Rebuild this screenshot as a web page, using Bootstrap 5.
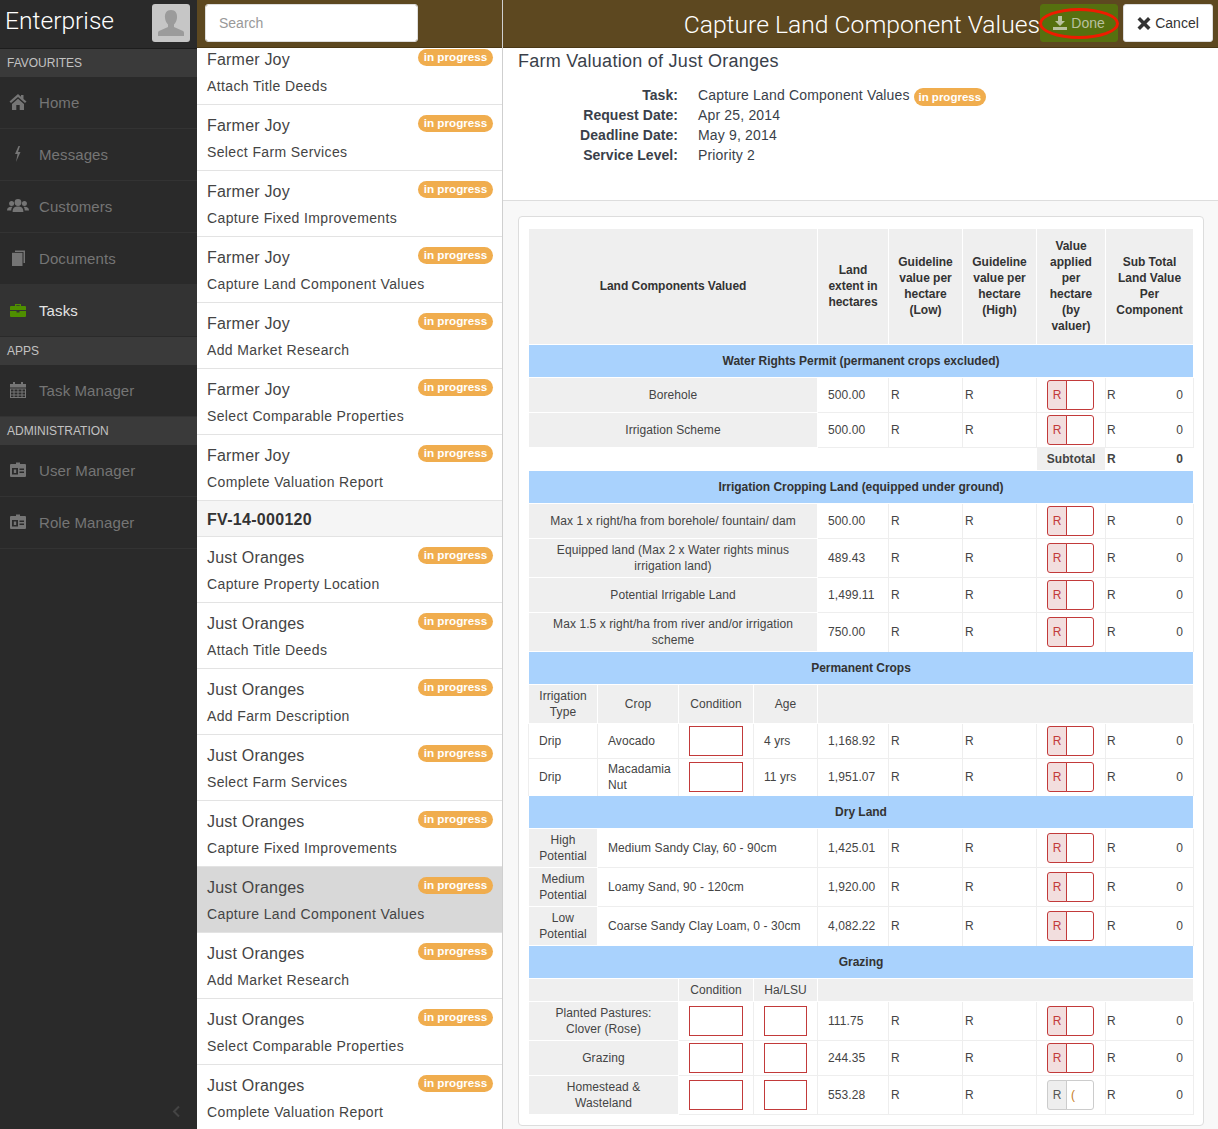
<!DOCTYPE html>
<html lang="en">
<head>
    <meta charset="UTF-8">
    <meta name="viewport" content="width=device-width, initial-scale=1.0">
    <title>Capture Land Component Values</title>
    <link rel="stylesheet" href="https://cdn.jsdelivr.net/npm/bootstrap@5.3.0/dist/css/bootstrap.min.css">
    <style>
        html, body { height: 1129px; overflow: hidden; }
        body { font-family: "Liberation Sans", Arial, sans-serif; color: #3a3f4a; font-size: 14px; background: #fff; }
        .app-shell { height: 1129px; }

        /* sidebar */
        .side-pane { width: 197px; background: #2a2a2a; flex: none; position: relative; }
        .side-top { height: 49px; padding: 4px 7px 0 5px; border-bottom: 1px solid #1d1d1d; }
        .brand-name { font-family: Roboto, "Liberation Sans", sans-serif; font-size: 24.6px; font-weight: 300; color: #fff; line-height: 34px; }
        .avatar-box { width: 38px; height: 38px; background: #c6c6c6; border-radius: 3px; }
        .side-title { height: 28px; line-height: 28px; padding-left: 7px; background: #3a3a3a; color: #c2c2c2; font-size: 12px; }
        .side-link { height: 52px; padding: 1px 0 0 7px; color: #757575; font-size: 15px; letter-spacing: .1px; border-bottom: 1px solid #333; text-decoration: none; }
        .side-link.is-on { background: #333; color: #e4e4e4; border-bottom-color: #2a2a2a; }
        .side-ico { width: 22px; height: 18px; margin: 0 10px 3px 0; flex: none; fill: #757575; }
        .is-on .side-ico { fill: #4f8f00; }
        .side-arrow { position: absolute; left: 172px; bottom: 11px; width: 9px; height: 13px; }

        /* task list */
        .list-pane { width: 306px; flex: none; border-right: 1px solid #cfcfcf; }
        .pane-top { height: 48px; padding-top: 4px; background: #5d4820; border-bottom: 1px solid #4a3815; }
        .search-box { width: 213px; height: 38px; margin-left: 8px; font-size: 14px; border-color: #ddd; border-radius: 3px; padding-left: 13px; }
        .search-box::placeholder { color: #999; }
        .list-clip { height: 1081px; overflow: hidden; }
        .task-list { margin-top: -9px; }
        .task-row { height: 66px; padding: 0 10px; border: 0; border-bottom: 2px solid #e3e3e3; border-radius: 0 !important; color: #444; position: relative; }
        .task-row.is-current { background: #d8d8d8; }
        .task-who { font-size: 16px; letter-spacing: .2px; line-height: 20px; padding-top: 11px; }
        .task-what { font-size: 14px; letter-spacing: .37px; line-height: 18px; margin-top: 7px; }
        .task-head { height: 36px; line-height: 37px; padding: 0 10px; background: #f5f5f5; border: 0; border-bottom: 2px solid #e3e3e3; font-size: 16px; letter-spacing: .3px; font-weight: 700; color: #333; border-radius: 0 !important; }
        .state-pill { display: inline-block; background: #f0ad4e; color: #fff; font-size: 11.5px; font-weight: 700; line-height: 18px; width: 72px; margin: -1px 0; text-align: center; white-space: nowrap; border-radius: 9px; letter-spacing: 0; vertical-align: -1px; }
        .task-row .state-pill { position: absolute; right: 9px; top: 10px; width: 75px; height: 17px; margin: 0; line-height: 15px; font-size: 11.7px; }

        /* main */
        .main-pane { min-width: 0; }
        .main-top { height: 48px; padding: 4px 5px 0 0; }
        .main-title { font-family: Roboto, "Liberation Sans", sans-serif; font-size: 24.7px; color: #fff; line-height: 42px; font-weight: 300; }
        .btn-done { width: 78px; height: 38px; background: #56700f; border-color: #56700f; color: #b9c19f; font-size: 14px; padding: 0; position: relative; border-radius: 3px; }
        .btn-done:hover { background: #56700f; color: #b9c19f; }
        .btn-off { width: 90px; height: 38px; margin-left: 5px; background: #fff; border-color: #ddd; color: #333; font-size: 14px; padding: 0; border-radius: 3px; }
        .done-ring { position: absolute; left: -2px; right: -2px; top: 3px; bottom: 2px; border: 3px solid #ee1c00; border-radius: 50%; }
        .btn-ico { width: 14px; height: 14px; margin-right: 4px; vertical-align: -2px; }
        .job-info { height: 153px; padding: 0 15px; border-bottom: 1px solid #ddd; }
        .job-title { font-size: 18px; letter-spacing: .27px; line-height: 24px; padding-top: 1px; margin: 0 0 12px; font-weight: 400; color: #3a3f4a; }
        .job-grid { display: grid; grid-template-columns: 160px auto; grid-auto-rows: 20px; column-gap: 20px; justify-content: start; line-height: 20px; margin: 0; }
        .job-grid dt { text-align: right; font-weight: 700; letter-spacing: .05px; }
        .job-grid dd { margin: 0; letter-spacing: .17px; }
        .work-area { background: #f8f8f8; height: 928px; padding: 15px 14px 0 15px; }
        .form-card { height: 910px; padding: 11px 10px 0 9px; border: 1px solid #ddd; border-radius: 4px; background: #fff; }

        /* valuation table */
        .val-table { table-layout: fixed; width: 665px; font-size: 12px; letter-spacing: .08px; line-height: 16px; color: #444; --bs-table-border-color: #eee; margin: 0; }
        .val-table col:nth-child(1) { width: 69px; }
        .val-table col:nth-child(2) { width: 81px; }
        .val-table col:nth-child(3) { width: 75px; }
        .val-table col:nth-child(4) { width: 64px; }
        .val-table col:nth-child(5) { width: 71px; }
        .val-table col:nth-child(6), .val-table col:nth-child(7) { width: 74px; }
        .val-table col:nth-child(8) { width: 69px; }
        .val-table col:nth-child(9) { width: 88px; }
        .val-table td, .val-table th { padding: 2px 10px; vertical-align: middle; height: 35px; }
        .val-table .row-mid td { height: 37px; }
        .val-table .row-tall td { height: 39px; }
        .val-table .row-sub td { height: 39px; }
        .val-table .row-thin td { height: 23px; }
        .val-table .row-total td { height: 23px; padding-top: 0; padding-bottom: 0; border-top-color: #eee; border-left-color: #fff; border-right-color: #fff; }
        .val-table .shade { background: #efefef; border: 1px solid #fff; text-align: center; padding-left: 6px; padding-right: 6px; }
        .val-table thead th { height: 116px; background: #efefef; border: 1px solid #fff; text-align: center; color: #333; padding: 0 5px 2px; letter-spacing: -.03px; }
        .val-table .band td { height: 33px; background: #a9d2fd; border: 1px solid #fff; text-align: center; font-weight: 700; color: #333; letter-spacing: -.03px; }
        .val-table .rand { padding-left: 2px; padding-right: 2px; }
        .val-table .sum-cell { padding-left: 1px; }
        .val-table .box-cell { padding: 2px 0 2px 10px; }
        .sum-line { display: flex; justify-content: space-between; }
        .val-box { width: 47px; height: 30px; flex-wrap: nowrap; }
        .val-box .input-group-text { width: 20px; padding: 0; justify-content: center; font-size: 12px; background: #f2dede; border-color: #c23a3a; color: #c23a3a; border-radius: 3px 0 0 3px; }
        .val-box .form-control { min-width: 0; padding: 0 4px; font-size: 12px; border-color: #c23a3a; border-radius: 0 3px 3px 0; box-shadow: none; color: #c77d1e; }
        .val-box.is-plain .input-group-text { background: #eee; border-color: #ccc; color: #555; }
        .val-box.is-plain .form-control { border-color: #ccc; }
        .cell-field { height: 30px; border: 1px solid #c23a3a; border-radius: 0; padding: 0 4px; display: block; }
        .field-wide { width: 54px; }
        .field-small { width: 43px; }
    </style>
</head>
<body>
<svg width="0" height="0" class="position-absolute">
    <defs>
        <symbol id="i-home" viewBox="0 0 18 18"><path d="M9 1 L0.5 8.5 L2 10 L9 4 L16 10 L17.5 8.5 L14.5 6 V2 H12 V3.8 Z M3 11 L9 5.8 L15 11 V17 H10.7 V12 H7.3 V17 H3 Z"/></symbol>
        <symbol id="i-bolt" viewBox="0 0 18 18"><path d="M9.5 1 L6 9 H8.5 L7 17 L11.5 7 H9 L11 1 Z"/></symbol>
        <symbol id="i-users" viewBox="0 0 22 18"><circle cx="11" cy="5.5" r="3.4"/><circle cx="4.6" cy="6.5" r="2.5"/><circle cx="17.4" cy="6.5" r="2.5"/><path d="M5.6 15 C5.6 10.5 8 9.5 11 9.5 C14 9.5 16.4 10.5 16.4 15 Z M0 13.5 C0 10.5 2 9.5 5.5 9.8 C4.5 11 4.3 12.3 4.3 13.5 Z M22 13.5 C22 10.5 20 9.5 16.5 9.8 C17.5 11 17.7 12.3 17.7 13.5 Z"/></symbol>
        <symbol id="i-docs" viewBox="0 0 18 18"><path d="M6 1.5 H16 V14 H14.5 V3 H6 Z"/><path d="M3 3.8 H13.5 V17 H3 Z"/></symbol>
        <symbol id="i-case" viewBox="0 0 18 18"><path d="M6 3 H12 V5 H16 Q17 5 17 6 V9 H1 V6 Q1 5 2 5 H6 Z M7.3 4.2 V5 H10.7 V4.2 Z M1 10 H7.5 V11.5 H10.5 V10 H17 V15 Q17 16 16 16 H2 Q1 16 1 15 Z"/></symbol>
        <symbol id="i-cal" viewBox="0 0 18 18"><path d="M4 1 H6 V3 H12 V1 H14 V3 H17 V6.500 H1 V3 H4 Z"/><path fill-rule="evenodd" d="M1 7.500 H17 V17 H1 Z M2 8.500 V10.500 H4.500 V8.500 Z M5.500 8.500 V10.500 H8.500 V8.500 Z M9.500 8.500 V10.500 H12.500 V8.500 Z M13.500 8.500 V10.500 H16 V8.500 Z M2 11.500 V13.500 H4.500 V11.500 Z M5.500 11.500 V13.500 H8.500 V11.500 Z M9.500 11.500 V13.500 H12.500 V11.500 Z M13.500 11.500 V13.500 H16 V11.500 Z M2 14.500 V16 H4.500 V14.500 Z M5.500 14.500 V16 H8.500 V14.500 Z M9.500 14.500 V16 H12.500 V14.500 Z M13.500 14.500 V16 H16 V14.500 Z"/></symbol>
        <symbol id="i-card" viewBox="0 0 18 18"><path fill-rule="evenodd" d="M7 3 V1.5 H11 V3 H16 Q17 3 17 4 V15 Q17 16 16 16 H2 Q1 16 1 15 V4 Q1 3 2 3 Z M3 7 V13.5 H9 V7 Z M10.5 7.5 V9 H15 V7.5 Z M10.5 10.5 V12 H15 V10.5 Z"/><path d="M4.8 8.5 H7.2 V12 H4.8 Z"/></symbol>
    </defs>
</svg>

<div class="app-shell d-flex">
    <!-- Sidebar -->
    <aside class="side-pane d-flex flex-column">
        <div class="side-top d-flex justify-content-between">
            <span class="brand-name">Enterprise</span>
            <div class="avatar-box">
                <svg width="38" height="38" viewBox="0 0 38 38" fill="#9b9b9b"><path d="M19 6 C23.5 6 25.5 9.5 25 14 C24.7 17 23.5 19 22 20.5 V23 L31 27 Q32 27.5 32 29 V32 H6 V29 Q6 27.5 7 27 L16 23 V20.5 C14.5 19 13.300 17 13 14 C12.500 9.500 14.500 6 19 6 Z"/></svg>
            </div>
        </div>
        <div class="side-title">FAVOURITES</div>
        <a class="side-link d-flex align-items-center" href="#"><svg class="side-ico"><use href="#i-home"/></svg>Home</a>
        <a class="side-link d-flex align-items-center" href="#"><svg class="side-ico"><use href="#i-bolt"/></svg>Messages</a>
        <a class="side-link d-flex align-items-center" href="#"><svg class="side-ico"><use href="#i-users"/></svg>Customers</a>
        <a class="side-link d-flex align-items-center" href="#"><svg class="side-ico"><use href="#i-docs"/></svg>Documents</a>
        <a class="side-link is-on d-flex align-items-center" href="#"><svg class="side-ico"><use href="#i-case"/></svg>Tasks</a>
        <div class="side-title">APPS</div>
        <a class="side-link d-flex align-items-center" href="#"><svg class="side-ico"><use href="#i-cal"/></svg>Task Manager</a>
        <div class="side-title">ADMINISTRATION</div>
        <a class="side-link d-flex align-items-center" href="#"><svg class="side-ico"><use href="#i-card"/></svg>User Manager</a>
        <a class="side-link d-flex align-items-center" href="#"><svg class="side-ico"><use href="#i-card"/></svg>Role Manager</a>
        <svg class="side-arrow" viewBox="0 0 9 13"><path d="M7 1.500 L2 6.500 L7 11.500" fill="none" stroke="#444" stroke-width="2"/></svg>
    </aside>

    <!-- Task list -->
    <section class="list-pane">
        <div class="pane-top"><input class="form-control search-box" type="text" placeholder="Search"></div>
        <div class="list-clip">
            <div class="list-group list-group-flush task-list">
                <div class="list-group-item task-row"><div class="task-who">Farmer Joy</div><div class="task-what">Attach Title Deeds</div><span class="state-pill">in progress</span></div>
                <div class="list-group-item task-row"><div class="task-who">Farmer Joy</div><div class="task-what">Select Farm Services</div><span class="state-pill">in progress</span></div>
                <div class="list-group-item task-row"><div class="task-who">Farmer Joy</div><div class="task-what">Capture Fixed Improvements</div><span class="state-pill">in progress</span></div>
                <div class="list-group-item task-row"><div class="task-who">Farmer Joy</div><div class="task-what">Capture Land Component Values</div><span class="state-pill">in progress</span></div>
                <div class="list-group-item task-row"><div class="task-who">Farmer Joy</div><div class="task-what">Add Market Research</div><span class="state-pill">in progress</span></div>
                <div class="list-group-item task-row"><div class="task-who">Farmer Joy</div><div class="task-what">Select Comparable Properties</div><span class="state-pill">in progress</span></div>
                <div class="list-group-item task-row"><div class="task-who">Farmer Joy</div><div class="task-what">Complete Valuation Report</div><span class="state-pill">in progress</span></div>
                <div class="list-group-item task-head">FV-14-000120</div>
                <div class="list-group-item task-row"><div class="task-who">Just Oranges</div><div class="task-what">Capture Property Location</div><span class="state-pill">in progress</span></div>
                <div class="list-group-item task-row"><div class="task-who">Just Oranges</div><div class="task-what">Attach Title Deeds</div><span class="state-pill">in progress</span></div>
                <div class="list-group-item task-row"><div class="task-who">Just Oranges</div><div class="task-what">Add Farm Description</div><span class="state-pill">in progress</span></div>
                <div class="list-group-item task-row"><div class="task-who">Just Oranges</div><div class="task-what">Select Farm Services</div><span class="state-pill">in progress</span></div>
                <div class="list-group-item task-row"><div class="task-who">Just Oranges</div><div class="task-what">Capture Fixed Improvements</div><span class="state-pill">in progress</span></div>
                <div class="list-group-item task-row is-current"><div class="task-who">Just Oranges</div><div class="task-what">Capture Land Component Values</div><span class="state-pill">in progress</span></div>
                <div class="list-group-item task-row"><div class="task-who">Just Oranges</div><div class="task-what">Add Market Research</div><span class="state-pill">in progress</span></div>
                <div class="list-group-item task-row"><div class="task-who">Just Oranges</div><div class="task-what">Select Comparable Properties</div><span class="state-pill">in progress</span></div>
                <div class="list-group-item task-row"><div class="task-who">Just Oranges</div><div class="task-what">Complete Valuation Report</div><span class="state-pill">in progress</span></div>
            </div>
        </div>
    </section>

    <!-- Main -->
    <main class="main-pane flex-grow-1">
        <div class="pane-top main-top d-flex justify-content-end">
            <span class="main-title">Capture Land Component Values</span>
            <button class="btn btn-done" type="button">
                <svg class="btn-ico" viewBox="0 0 14 14" fill="#b9c19f"><path d="M5 0 H9 V5 H12 L7 10 L2 5 H5 Z M0 11 H14 V14 H0 Z"/></svg>Done
                <span class="done-ring"></span>
            </button>
            <button class="btn btn-off" type="button">
                <svg class="btn-ico" viewBox="0 0 14 14" fill="#333"><path d="M3 1 L7 5 L11 1 L13.500 3.500 L9.500 7.500 L13.500 11.500 L11 14 L7 10 L3 14 L0.500 11.500 L4.500 7.500 L0.500 3.500 Z"/></svg>Cancel
            </button>
        </div>
        <div class="job-info">
            <h1 class="job-title">Farm Valuation of Just Oranges</h1>
            <dl class="job-grid">
                <dt>Task:</dt><dd>Capture Land Component Values <span class="state-pill">in progress</span></dd>
                <dt>Request Date:</dt><dd>Apr 25, 2014</dd>
                <dt>Deadline Date:</dt><dd>May 9, 2014</dd>
                <dt>Service Level:</dt><dd>Priority 2</dd>
            </dl>
        </div>
        <div class="work-area">
            <div class="form-card">
                <table class="table table-bordered val-table">
                    <colgroup><col><col><col><col><col><col><col><col><col></colgroup>
                    <thead>
                        <tr><th colspan="4">Land Components Valued</th><th>Land extent in hectares</th><th>Guideline value per hectare (Low)</th><th>Guideline value per hectare (High)</th><th>Value applied per hectare (by valuer)</th><th>Sub Total Land Value Per Component</th></tr>
                    </thead>
                    <tbody>
                        <tr class="band"><td colspan="9">Water Rights Permit (permanent crops excluded)</td></tr>
                        <tr><td colspan="4" class="shade">Borehole</td><td>500.00</td><td class="rand">R</td><td class="rand">R</td><td class="box-cell"><div class="input-group val-box"><span class="input-group-text">R</span><input class="form-control" type="text"></div></td><td class="sum-cell"><div class="sum-line"><span>R</span><span>0</span></div></td></tr>
                        <tr><td colspan="4" class="shade">Irrigation Scheme</td><td>500.00</td><td class="rand">R</td><td class="rand">R</td><td class="box-cell"><div class="input-group val-box"><span class="input-group-text">R</span><input class="form-control" type="text"></div></td><td class="sum-cell"><div class="sum-line"><span>R</span><span>0</span></div></td></tr>
                        <tr class="row-total fw-bold"><td colspan="7"></td><td class="shade">Subtotal</td><td class="sum-cell"><div class="sum-line"><span>R</span><span>0</span></div></td></tr>

                        <tr class="band"><td colspan="9">Irrigation Cropping Land (equipped under ground)</td></tr>
                        <tr><td colspan="4" class="shade">Max 1 x right/ha from borehole/ fountain/ dam</td><td>500.00</td><td class="rand">R</td><td class="rand">R</td><td class="box-cell"><div class="input-group val-box"><span class="input-group-text">R</span><input class="form-control" type="text"></div></td><td class="sum-cell"><div class="sum-line"><span>R</span><span>0</span></div></td></tr>
                        <tr class="row-tall"><td colspan="4" class="shade">Equipped land (Max 2 x Water rights minus irrigation land)</td><td>489.43</td><td class="rand">R</td><td class="rand">R</td><td class="box-cell"><div class="input-group val-box"><span class="input-group-text">R</span><input class="form-control" type="text"></div></td><td class="sum-cell"><div class="sum-line"><span>R</span><span>0</span></div></td></tr>
                        <tr><td colspan="4" class="shade">Potential Irrigable Land</td><td>1,499.11</td><td class="rand">R</td><td class="rand">R</td><td class="box-cell"><div class="input-group val-box"><span class="input-group-text">R</span><input class="form-control" type="text"></div></td><td class="sum-cell"><div class="sum-line"><span>R</span><span>0</span></div></td></tr>
                        <tr class="row-tall"><td colspan="4" class="shade">Max 1.5 x right/ha from river and/or irrigation scheme</td><td>750.00</td><td class="rand">R</td><td class="rand">R</td><td class="box-cell"><div class="input-group val-box"><span class="input-group-text">R</span><input class="form-control" type="text"></div></td><td class="sum-cell"><div class="sum-line"><span>R</span><span>0</span></div></td></tr>

                        <tr class="band"><td colspan="9">Permanent Crops</td></tr>
                        <tr class="row-sub"><td class="shade">Irrigation Type</td><td class="shade">Crop</td><td class="shade">Condition</td><td class="shade">Age</td><td colspan="5" class="shade"></td></tr>
                        <tr><td>Drip</td><td>Avocado</td><td><input class="cell-field field-wide" type="text"></td><td>4 yrs</td><td>1,168.92</td><td class="rand">R</td><td class="rand">R</td><td class="box-cell"><div class="input-group val-box"><span class="input-group-text">R</span><input class="form-control" type="text"></div></td><td class="sum-cell"><div class="sum-line"><span>R</span><span>0</span></div></td></tr>
                        <tr class="row-mid"><td>Drip</td><td>Macadamia Nut</td><td><input class="cell-field field-wide" type="text"></td><td>11 yrs</td><td>1,951.07</td><td class="rand">R</td><td class="rand">R</td><td class="box-cell"><div class="input-group val-box"><span class="input-group-text">R</span><input class="form-control" type="text"></div></td><td class="sum-cell"><div class="sum-line"><span>R</span><span>0</span></div></td></tr>

                        <tr class="band"><td colspan="9">Dry Land</td></tr>
                        <tr class="row-tall"><td class="shade">High Potential</td><td colspan="3">Medium Sandy Clay, 60 - 90cm</td><td>1,425.01</td><td class="rand">R</td><td class="rand">R</td><td class="box-cell"><div class="input-group val-box"><span class="input-group-text">R</span><input class="form-control" type="text"></div></td><td class="sum-cell"><div class="sum-line"><span>R</span><span>0</span></div></td></tr>
                        <tr class="row-tall"><td class="shade">Medium Potential</td><td colspan="3">Loamy Sand, 90 - 120cm</td><td>1,920.00</td><td class="rand">R</td><td class="rand">R</td><td class="box-cell"><div class="input-group val-box"><span class="input-group-text">R</span><input class="form-control" type="text"></div></td><td class="sum-cell"><div class="sum-line"><span>R</span><span>0</span></div></td></tr>
                        <tr class="row-tall"><td class="shade">Low Potential</td><td colspan="3">Coarse Sandy Clay Loam, 0 - 30cm</td><td>4,082.22</td><td class="rand">R</td><td class="rand">R</td><td class="box-cell"><div class="input-group val-box"><span class="input-group-text">R</span><input class="form-control" type="text"></div></td><td class="sum-cell"><div class="sum-line"><span>R</span><span>0</span></div></td></tr>

                        <tr class="band"><td colspan="9">Grazing</td></tr>
                        <tr class="row-thin"><td colspan="2" class="shade"></td><td class="shade">Condition</td><td class="shade">Ha/LSU</td><td colspan="5" class="shade"></td></tr>
                        <tr class="row-tall"><td colspan="2" class="shade">Planted Pastures:<br>Clover (Rose)</td><td><input class="cell-field field-wide" type="text"></td><td><input class="cell-field field-small" type="text"></td><td>111.75</td><td class="rand">R</td><td class="rand">R</td><td class="box-cell"><div class="input-group val-box"><span class="input-group-text">R</span><input class="form-control" type="text"></div></td><td class="sum-cell"><div class="sum-line"><span>R</span><span>0</span></div></td></tr>
                        <tr><td colspan="2" class="shade">Grazing</td><td><input class="cell-field field-wide" type="text"></td><td><input class="cell-field field-small" type="text"></td><td>244.35</td><td class="rand">R</td><td class="rand">R</td><td class="box-cell"><div class="input-group val-box"><span class="input-group-text">R</span><input class="form-control" type="text"></div></td><td class="sum-cell"><div class="sum-line"><span>R</span><span>0</span></div></td></tr>
                        <tr class="row-tall"><td colspan="2" class="shade">Homestead &amp;<br>Wasteland</td><td><input class="cell-field field-wide" type="text"></td><td><input class="cell-field field-small" type="text"></td><td>553.28</td><td class="rand">R</td><td class="rand">R</td><td class="box-cell"><div class="input-group val-box is-plain"><span class="input-group-text">R</span><input class="form-control" type="text" value="("></div></td><td class="sum-cell"><div class="sum-line"><span>R</span><span>0</span></div></td></tr>
                    </tbody>
                </table>
            </div>
        </div>
    </main>
</div>

<script src="https://cdn.jsdelivr.net/npm/bootstrap@5.3.0/dist/js/bootstrap.bundle.min.js"></script>
</body>
</html>
